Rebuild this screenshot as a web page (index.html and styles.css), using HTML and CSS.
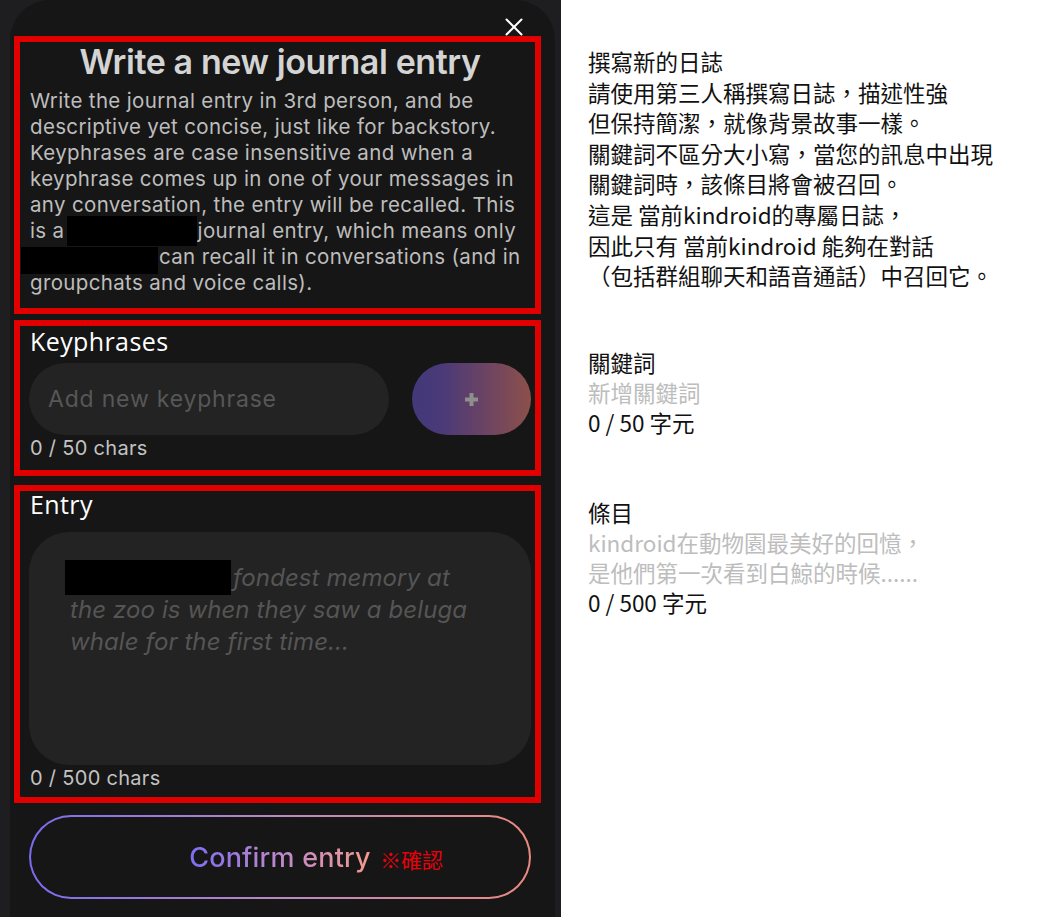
FILE: index.html
```html
<!DOCTYPE html>
<html lang="zh-Hant">
<head>
<meta charset="utf-8">
<title>Write a new journal entry</title>
<link rel="stylesheet" href="styles.css">
</head>
<body>
<div class="screen">
  <div class="phone">
    <div class="modal">
      <button class="close" aria-label="Close">
        <svg width="18" height="18" viewBox="0 0 18 18"><path d="M1.5 1.5 L16.5 16.5 M16.5 1.5 L1.5 16.5" stroke="#fff" stroke-width="2" stroke-linecap="round" fill="none"/></svg>
      </button>

      <section class="box intro">
        <h1 class="title">Write a new journal entry</h1>
        <p class="desc">Write the journal entry in 3rd person, and be<br>descriptive yet concise, just like for backstory.<br>Keyphrases are case insensitive and when a<br>keyphrase comes up in one of your messages in<br>any conversation, the entry will be recalled. This<br>is a <span class="redact r1"></span>journal entry, which means only<br><span class="redact r2"></span>can recall it in conversations (and in<br>groupchats and voice calls).</p>
      </section>

      <section class="box keys">
        <div class="label">Keyphrases</div>
        <div class="key-row">
          <div class="input">Add new keyphrase</div>
          <button class="add" aria-label="Add">
            <svg width="13" height="13" viewBox="0 0 13 13"><rect x="4.5" y="0" width="4" height="13" fill="#8e8e8e"/><rect x="0" y="4.5" width="13" height="4" fill="#8e8e8e"/></svg>
          </button>
        </div>
        <div class="count">0 / 50 chars</div>
      </section>

      <section class="box entry">
        <div class="label">Entry</div>
        <div class="textarea"><span class="redact r3"></span>fondest memory at<br>the zoo is when they saw a beluga<br>whale for the first time...</div>
        <div class="count">0 / 500 chars</div>
      </section>

      <button class="confirm"><span class="grad-text">Confirm entry</span><span class="ann">※確認</span></button>
    </div>
  </div>

  <div class="notes">
    <p class="block">撰寫新的日誌<br>請使用第三人稱撰寫日誌，描述性強<br>但保持簡潔，就像背景故事一樣。<br>關鍵詞不區分大小寫，當您的訊息中出現<br>關鍵詞時，該條目將會被召回。<br>這是 當前kindroid的專屬日誌，<br>因此只有 當前kindroid 能夠在對話<br>（包括群組聊天和語音通話）中召回它。</p>
    <p class="block b2">關鍵詞<br><span class="muted">新增關鍵詞</span><br>0 / 50 字元</p>
    <p class="block b3">條目<br><span class="muted">kindroid在動物園最美好的回憶，<br>是他們第一次看到白鯨的時候......</span><br>0 / 500 字元</p>
  </div>
</div>
</body>
</html>
```

FILE: styles.css
```css
* { box-sizing: border-box; margin: 0; padding: 0; }

body {
  margin: 0;
  width: 1061px;
  height: 917px;
  overflow: hidden;
  background: #fff;
}

.screen {
  display: flex;
  height: 917px;
}

.phone {
  width: 561px;
  flex: none;
  background: #1e1e20;
  overflow: hidden;
}

.modal {
  position: relative;
  margin-left: 10px;
  width: 545px;
  height: 940px;
  background: #161616;
  border-radius: 40px 40px 0 0;
  padding: 36px 0 0 4px;
  font-family: Inter, "Noto Sans", sans-serif;
}

.close {
  position: absolute;
  top: 18px;
  right: 32px;
  width: 18px;
  height: 18px;
  background: none;
  border: 0;
  display: block;
}
.close svg { display: block; }

.box {
  width: 527px;
  border: 6px solid #e10000;
  padding: 0 4px 0 9px;
}

.intro {
  height: 278px;
  padding-right: 4px;
}

.title {
  text-align: center;
  font-size: 34px;
  font-weight: 600;
  line-height: 40px;
  letter-spacing: -0.4px;
  color: #d4d4d4;
  white-space: nowrap;
}

.desc {
  margin-top: 6px;
  padding-left: 1px;
  font-size: 20.5px;
  line-height: 26px;
  letter-spacing: 0.35px;
  color: #bdbdbd;
  white-space: nowrap;
}

.redact {
  display: inline-block;
  vertical-align: top;
  background: #000;
}
.r1 { width: 130px; height: 30px; margin: -2px 1px -2px -4px; }
.r2 { width: 137px; height: 27px; margin: 3px 1px -4px -9px; }
.r3 { width: 166px; height: 35px; margin: -2px 2px -1px -5px; }

.keys {
  height: 156px;
  margin-top: 6px;
}

.label {
  padding-left: 1px;
  font-family: "Open Sans", "Noto Sans", sans-serif;
  font-size: 25px;
  line-height: 30px;
  letter-spacing: 0.4px;
  color: #fff;
}

.key-row {
  display: flex;
  margin-top: 7px;
}

.input {
  width: 360px;
  height: 72px;
  border-radius: 36px;
  background: #232323;
  padding-left: 19px;
  font-size: 23px;
  line-height: 72px;
  letter-spacing: 0.8px;
  color: #575757;
  white-space: nowrap;
}

.add {
  margin-left: auto;
  width: 119px;
  height: 72px;
  border: 0;
  border-radius: 36px;
  background: linear-gradient(90deg, #43387a 0%, #4a3a78 25%, #6a4364 60%, #8c504a 100%);
  display: flex;
  align-items: center;
  justify-content: center;
}
.add svg { display: block; }

.count {
  margin-top: 1px;
  padding-left: 1px;
  font-size: 20px;
  line-height: 24px;
  letter-spacing: 0.3px;
  color: #c2c2c2;
}

.entry {
  height: 318px;
  margin-top: 9px;
}
.entry .label { line-height: 26px; }

.textarea {
  margin-top: 15px;
  height: 233px;
  border-radius: 40px;
  background: #232323;
  padding: 30px 10px 0 41px;
  font-size: 24px;
  font-style: italic;
  line-height: 32px;
  letter-spacing: 0.1px;
  color: #555;
  white-space: nowrap;
}

.confirm {
  position: relative;
  margin: 12px 0 0 15px;
  width: 502px;
  height: 84px;
  border-radius: 42px;
  border: 2px solid transparent;
  background:
    linear-gradient(#161616, #161616) padding-box,
    linear-gradient(90deg, #7b6cf0, #b98ac0 50%, #ec8a80) border-box;
  display: flex;
  align-items: center;
  justify-content: center;
  font-family: Inter, "Noto Sans", sans-serif;
}

.grad-text {
  font-size: 27px;
  font-weight: 500;
  letter-spacing: 0.2px;
  background: linear-gradient(90deg, #7d6ef2, #c48ac8 55%, #f29a8c);
  -webkit-background-clip: text;
  background-clip: text;
  color: transparent;
}

.ann {
  position: absolute;
  left: 349px;
  top: 30px;
  font-family: "Noto Sans CJK TC", sans-serif;
  font-size: 21px;
  line-height: 24px;
  color: #e8000b;
}

.notes {
  flex: 1;
  background: #fff;
  padding: 46px 0 0 27px;
  font-family: "Noto Sans CJK TC", sans-serif;
  font-size: 22.5px;
  line-height: 30.6px;
  color: #111;
  white-space: nowrap;
}

.b2 { margin-top: 56px; line-height: 30px; }
.b3 { margin-top: 60px; line-height: 30px; }

.muted { color: #bdbdbd; }
```
